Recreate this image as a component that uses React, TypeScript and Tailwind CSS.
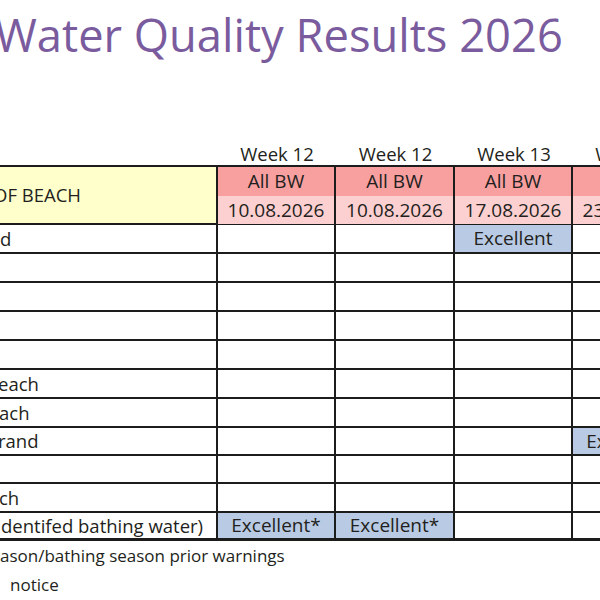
import React from "react";

type Cell = { text?: string; blue?: boolean };

interface BeachRow {
  name: string;
  offset: string;
  height: string;
  cells: Cell[];
}

const weeks = ["Week 12", "Week 12", "Week 13", "Week 14"];
const dates = ["10.08.2026", "10.08.2026", "17.08.2026", "23.08.2026"];

const empty: Cell[] = [{}, {}, {}, {}];

const rows: BeachRow[] = [
  { name: "d", offset: "pl-[19px]", height: "h-[29px]", cells: [{}, {}, { text: "Excellent", blue: true }, {}] },
  { name: "", offset: "pl-[19px]", height: "h-[29px]", cells: empty },
  { name: "", offset: "pl-[19px]", height: "h-[29px]", cells: empty },
  { name: "", offset: "pl-[19px]", height: "h-[29px]", cells: empty },
  { name: "", offset: "pl-[19px]", height: "h-[29px]", cells: empty },
  { name: "each", offset: "pl-[17px]", height: "h-[29px]", cells: empty },
  { name: "ach", offset: "pl-[18px]", height: "h-[29px]", cells: empty },
  { name: "rand", offset: "pl-[17px]", height: "h-[28px]", cells: [{}, {}, {}, { text: "Excellent*", blue: true }] },
  { name: "", offset: "pl-[19px]", height: "h-[28px]", cells: empty },
  { name: "ch", offset: "pl-[18px]", height: "h-[29px]", cells: empty },
  {
    name: "dentifed bathing water)",
    offset: "pl-[20px]",
    height: "h-[28px]",
    cells: [{ text: "Excellent*", blue: true }, { text: "Excellent*", blue: true }, {}, {}],
  },
];

const colW = ["w-[118px]", "w-[119px]", "w-[118px]", "w-[118px]"];

export default function App() {
  return (
    <div className="w-[600px] h-[600px] overflow-hidden bg-white font-['Open_Sans',sans-serif] text-[#231f20]">
      <h1 className="ml-[-5px] pt-[5px] h-[142px] text-[45.3px] leading-[60px] text-[#7a5c9e] whitespace-nowrap">
        Water Quality Results 2026
      </h1>

      <div className="ml-[-19px] w-[740px]">
        {/* week labels */}
        <div className="flex h-[23px] text-[18.5px] leading-[23px]">
          <div className="w-[237px] shrink-0" />
          {weeks.map((w, i) => (
            <div key={i} className={`${colW[i]} shrink-0 text-center whitespace-nowrap`}>
              {w}
            </div>
          ))}
        </div>

        <div className="border-t-2 border-[#1c1c1c]">
          {/* header */}
          <div className="flex h-[58px] border-b-2 border-[#1c1c1c]">
            <div className="w-[237px] shrink-0 bg-[#ffffcc] border-r-2 border-[#1c1c1c] flex items-center pl-[12px] text-[18.5px]">
              OF BEACH
            </div>
            {dates.map((d, i) => (
              <div key={i} className={`${colW[i]} shrink-0 border-r-2 border-[#1c1c1c] flex flex-col text-[19px]`}>
                <div className="h-[29px] bg-[#f8a0a0] flex items-center justify-center">All BW</div>
                <div className="flex-1 bg-[#fcd0d0] flex items-center justify-center">{d}</div>
              </div>
            ))}
          </div>

          {rows.map((r, ri) => (
            <div
              key={ri}
              className={`flex ${r.height} text-[19px] ${
                ri === rows.length - 1 ? "border-b-[3px]" : "border-b-2"
              } border-[#1c1c1c]`}
            >
              <div className={`w-[237px] shrink-0 border-r-2 border-[#1c1c1c] flex items-center whitespace-nowrap text-[18.5px] ${r.offset}`}>
                {r.name}
              </div>
              {r.cells.map((c, ci) => (
                <div
                  key={ci}
                  className={`${colW[ci]} shrink-0 border-r-2 border-[#1c1c1c] flex items-center justify-center whitespace-nowrap ${
                    c.blue ? "bg-[#b9cbe4]" : ""
                  }`}
                >
                  {c.text}
                </div>
              ))}
            </div>
          ))}
        </div>

        <div className="pl-[19px] text-[17px] leading-[29px] whitespace-nowrap">
          <p>ason/bathing season prior warnings</p>
          <p className="pl-[10px]">notice</p>
        </div>
      </div>
    </div>
  );
}
